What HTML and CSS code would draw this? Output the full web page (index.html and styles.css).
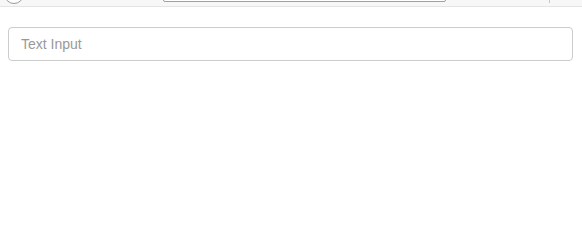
FILE: index.html
```html
<!DOCTYPE html>
<html>
<head>
<meta charset="utf-8">
<link rel="stylesheet" href="styles.css">
</head>
<body>
<div class="topbar">
  <span class="circle"></span>
  <span class="field"></span>
  <span class="tick"></span>
</div>
<main class="content">
  <input class="text-input" type="text" placeholder="Text Input">
</main>
</body>
</html>
```
FILE: styles.css
```css
html, body {
  margin: 0;
  padding: 0;
  background: #fff;
  font-family: "Liberation Sans", Arial, sans-serif;
}
.topbar {
  position: relative;
  height: 6px;
  background: #f7f7f7;
  border-bottom: 1px solid #e4e4e4;
  overflow: hidden;
}
.circle {
  position: absolute;
  left: 4px;
  top: -16px;
  width: 18px;
  height: 18px;
  border: 1px solid #9a9a9a;
  border-radius: 50%;
  background: #fff;
}
.field {
  position: absolute;
  left: 163px;
  top: -10px;
  width: 281px;
  height: 10px;
  border: 1px solid #a0a0a0;
  border-radius: 2px;
  background: #fff;
}
.tick {
  position: absolute;
  left: 549px;
  top: 0;
  width: 1px;
  height: 3px;
  background: #c8c8c8;
}
.content {
  padding: 20px 9px 0 8px;
}
.text-input {
  display: block;
  box-sizing: border-box;
  width: 100%;
  height: 34px;
  padding: 0 12px;
  border: 1px solid #cccccc;
  border-radius: 4px;
  background: #fff;
  font-family: "Liberation Sans", Arial, sans-serif;
  font-size: 14px;
  color: #555;
  outline: none;
}
.text-input::placeholder {
  color: #999;
}
```
